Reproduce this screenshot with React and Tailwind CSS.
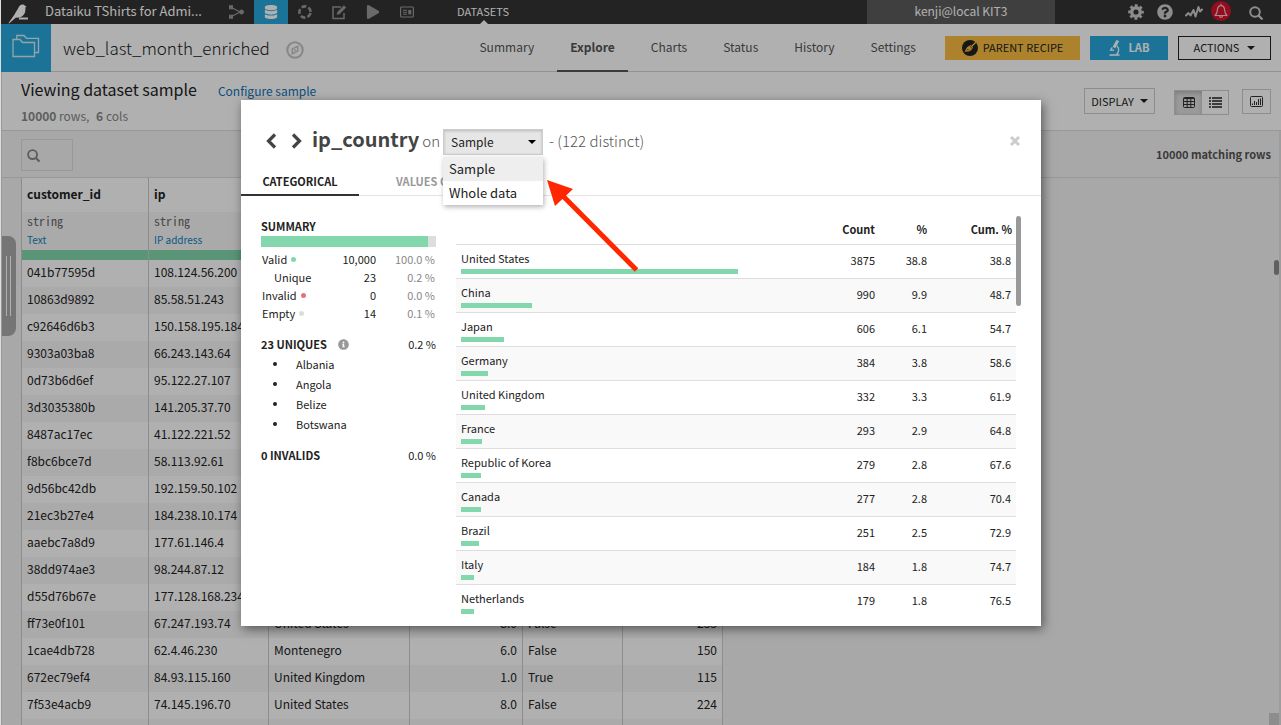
import React from "react";
import { FaQuestionCircle, FaPlay, FaInfoCircle, FaDatabase } from "react-icons/fa";

const tabs = ["Summary", "Explore", "Charts", "Status", "History", "Settings"];

const rows = [
  ["041b77595d", "108.124.56.200"],
  ["10863d9892", "85.58.51.243"],
  ["c92646d6b3", "150.158.195.184"],
  ["9303a03ba8", "66.243.143.64"],
  ["0d73b6d6ef", "95.122.27.107"],
  ["3d3035380b", "141.205.37.70"],
  ["8487ac17ec", "41.122.221.52"],
  ["f8bc6bce7d", "58.113.92.61"],
  ["9d56bc42db", "192.159.50.102"],
  ["21ec3b27e4", "184.238.10.174"],
  ["aaebc7a8d9", "177.61.146.4"],
  ["38dd974ae3", "98.244.87.12"],
  ["d55d76b67e", "177.128.168.234"],
  ["ff73e0f101", "67.247.193.74", "United States", "8.0", "False", "233"],
  ["1cae4db728", "62.4.46.230", "Montenegro", "6.0", "False", "150"],
  ["672ec79ef4", "84.93.115.160", "United Kingdom", "1.0", "True", "115"],
  ["7f53e4acb9", "74.145.196.70", "United States", "8.0", "False", "224"],
  ["", ""],
];

const countries = [
  ["United States", 277, "3875", "38.8", "38.8"],
  ["China", 71, "990", "9.9", "48.7"],
  ["Japan", 43, "606", "6.1", "54.7"],
  ["Germany", 27, "384", "3.8", "58.6"],
  ["United Kingdom", 24, "332", "3.3", "61.9"],
  ["France", 21, "293", "2.9", "64.8"],
  ["Republic of Korea", 20, "279", "2.8", "67.6"],
  ["Canada", 20, "277", "2.8", "70.4"],
  ["Brazil", 18, "251", "2.5", "72.9"],
  ["Italy", 13, "184", "1.8", "74.7"],
  ["Netherlands", 13, "179", "1.8", "76.5"],
];

const summary = [
  ["Valid", "bg-[#82d8ac]", "10,000", "100.0 %"],
  ["Unique", null, "23", "0.2 %"],
  ["Invalid", "bg-[#e0757e]", "0", "0.0 %"],
  ["Empty", "bg-[#dddddd]", "14", "0.1 %"],
];

function Bird() {
  return (
    <svg viewBox="0 0 21 20" className="h-5 w-[21px]" fill="#fff">
      <path d="M0.500 19 L6.500 10.500 C8 8 8.600 6.500 9.800 5 C11 3 11.600 0.600 14.300 0.500 C15.800 0.400 16.700 1 17.200 2 L18.600 2.600 L17.400 3.400 C17.600 6.500 17.300 9.800 14.500 12 C13 13.200 10.500 13.800 8 13.600 L1 19.400 Z" />
      <rect x="11" y="13.500" width="9" height="2" />
    </svg>
  );
}

function ShareIcon() {
  return (
    <svg viewBox="0 0 16 14" className="h-[14px] w-4" fill="#999" stroke="#999">
      <path d="M2.500 2.500 L11 7 L2.500 11.500" fill="none" strokeWidth="1.200" />
      <rect x="0.500" y="0.800" width="3" height="3" />
      <rect x="0.500" y="10.200" width="3" height="3" />
      <circle cx="12.500" cy="7" r="2" />
    </svg>
  );
}

function RingIcon() {
  return (
    <svg viewBox="0 0 16 16" className="size-4" fill="none" stroke="#999" strokeWidth="2.600">
      <circle cx="8" cy="8" r="5.600" strokeDasharray="4.900 2.140" strokeDashoffset="-1.100" />
    </svg>
  );
}

function EditIcon() {
  return (
    <svg viewBox="0 0 16 16" className="size-4" fill="none" stroke="#999">
      <path d="M10 3 H2 V14.500 H13 V9" strokeWidth="1.500" />
      <path d="M6 10.500 L6.600 7.900 L13 1.600 L14.900 3.500 L8.600 9.900 Z" fill="#999" strokeWidth="0.500" />
    </svg>
  );
}

function CardIcon() {
  return (
    <svg viewBox="0 0 14 12" className="h-3 w-[14px]" fill="none" stroke="#999">
      <rect x="0.600" y="1" width="12.800" height="10" rx="1" strokeWidth="1.200" />
      <path d="M3 4.200 H7 M3 6.200 H7 M3 8.200 H7" strokeWidth="1.100" />
      <rect x="8.300" y="4" width="3" height="4.400" fill="#999" stroke="none" />
    </svg>
  );
}

function GearIcon() {
  return (
    <svg viewBox="0 0 16 16" className="size-4" fill="none" stroke="#ccc">
      <circle cx="8" cy="8" r="4.300" strokeWidth="3.400" />
      <circle cx="8" cy="8" r="6.600" strokeWidth="2.400" strokeDasharray="2.900 2.284" strokeDashoffset="1.450" />
    </svg>
  );
}

function ActivityIcon() {
  return (
    <svg viewBox="0 0 18 14" className="h-[14px] w-[18px]" fill="none" stroke="#ccc" strokeWidth="2" strokeLinejoin="round" strokeLinecap="round">
      <path d="M1 10.500 L3.500 8 L5.500 10.500 L8.500 5 L10.500 11.500 L13.500 2 L15 6.500 L17 4.500" />
    </svg>
  );
}

function BellIcon() {
  return (
    <svg viewBox="0 0 14 16" className="h-4 w-[14px]" fill="none" stroke="#f0c8cc" strokeWidth="1.200" strokeLinejoin="round">
      <path d="M1 12.500 C3.300 10.500 3.200 8.500 3.500 6.300 C3.800 4 5 2.600 7 2.600 C9 2.600 10.200 4 10.500 6.300 C10.800 8.500 10.700 10.500 13 12.500 Z" />
      <path d="M7 0.800 V2.600 M5.500 12.800 C5.600 14.800 8.400 14.800 8.500 12.800" />
    </svg>
  );
}

function SearchIcon({ color, className }) {
  return (
    <svg viewBox="0 0 14 14" className={className} fill="none" stroke={color}>
      <circle cx="6" cy="6" r="4.800" strokeWidth="2" />
      <path d="M9.700 9.700 L12.800 12.800" strokeWidth="2.300" strokeLinecap="round" />
    </svg>
  );
}

function FoldersIcon() {
  return (
    <svg viewBox="0 0 28 24" className="h-6 w-7" fill="none" stroke="#d8eef8" strokeWidth="1.300">
      <path d="M1 5.500 H8 L10.500 8.500 H22.500 V22.500 H1 Z" />
      <path d="M4.800 5.500 V1.500 H12 L14.500 4.300 H26.500 V18.500 H22.500" />
    </svg>
  );
}

function CompassIcon() {
  return (
    <svg viewBox="0 0 18 18" className="size-[18px]" fill="none" stroke="#c4c4c4">
      <circle cx="9" cy="9" r="7.700" strokeWidth="2" />
      <path d="M6.300 12.800 V7.900 L11.700 5.200 V10.100 Z" strokeWidth="1.600" />
      <circle cx="9" cy="9" r="0.900" fill="#c4c4c4" stroke="none" />
    </svg>
  );
}

function BroomIcon() {
  return (
    <svg viewBox="0 0 16 16" className="size-4">
      <circle cx="8" cy="8" r="8" fill="#222" />
      <path d="M14 2 L9.800 6.200" stroke="#f9be40" strokeWidth="1.300" />
      <path d="M8.600 5 L11 7.400 L9 10.500 C7 11.800 4.500 11.900 2.600 11.400 C3.600 10.200 4.300 8 5.600 6.800 Z" fill="#f9be40" />
      <path d="M4.600 10.600 L6.400 8.800 M7 10.800 L8 9.600 M7.600 6 L10 8.400" stroke="#222" strokeWidth="0.700" />
    </svg>
  );
}

function MicroscopeIcon() {
  return (
    <svg viewBox="0 0 12 16" className="h-4 w-3" fill="none" stroke="#fff">
      <path d="M0.500 15 H10.500" strokeWidth="1.600" />
      <path d="M8.800 0.600 L5 7.400" strokeWidth="3" />
      <path d="M3.200 7.400 L1.600 10.200 H5 M8 6 C10.300 8 10.300 11.500 7.600 14.500" strokeWidth="1.300" />
    </svg>
  );
}

function Caret() {
  return (
    <svg viewBox="0 0 8 4" className="h-1 w-2" fill="currentColor">
      <path d="M0 0 H8 L4 4 Z" />
    </svg>
  );
}

function Chevron({ d }) {
  return (
    <svg viewBox="0 0 12 16" className="h-4 w-3" fill="none" stroke="#444" strokeWidth="3.200">
      <path d={d} />
    </svg>
  );
}

function CloseIcon() {
  return (
    <svg viewBox="0 0 10 10" className="size-[10px]" fill="none" stroke="#ccc" strokeWidth="3">
      <path d="M1 1 L9 9 M9 1 L1 9" />
    </svg>
  );
}

function GridIcon() {
  return (
    <svg viewBox="0 0 12 11" className="h-[11px] w-3" fill="none" stroke="#333">
      <rect x="0.500" y="0.500" width="11" height="10" rx="1" />
      <path d="M0.500 1.500 H11.500 M0.500 4.500 H11.500 M0.500 7.500 H11.500 M4.200 1 V10.500 M7.800 1 V10.500" />
    </svg>
  );
}

function ListIcon() {
  return (
    <svg viewBox="0 0 13 11" className="h-[11px] w-[13px]" stroke="#222" strokeWidth="1.700">
      <path d="M0 1 H2 M3 1 H13 M0 4 H2 M3 4 H13 M0 7 H2 M3 7 H13 M0 10 H2 M3 10 H13" />
    </svg>
  );
}

function ChartIcon() {
  return (
    <svg viewBox="0 0 13 11" className="h-[11px] w-[13px]" fill="none" stroke="#333">
      <rect x="0.500" y="0.500" width="12" height="10" rx="1" />
      <path d="M2.500 9 V7.500 M4.500 9 V5 M6.500 9 V6 M8.500 9 V3 M10.500 9 V2.500" />
    </svg>
  );
}

function TopBar() {
  return (
    <header className="flex h-6 shrink-0 items-center bg-[#333] text-white">
      <a href="#home" aria-label="Home" className="ml-[7px] mt-[3px] block">
        <Bird />
      </a>
      <a href="#project" className="ml-4 w-[166px] whitespace-nowrap pb-[2px] text-[13px] leading-[22px]">
        Dataiku TShirts for Admi...
      </a>
      <nav aria-label="Sections" className="ml-[9px] flex h-full items-center">
        <button aria-label="Flow" className="flex h-full w-[34px] items-center justify-center"><ShareIcon /></button>
        <button aria-label="Datasets" className="flex h-full w-[34px] items-center justify-center bg-[#28a9dd]">
          <FaDatabase className="size-[14px] text-white" />
        </button>
        <button aria-label="Recipes" className="flex h-full w-[34px] items-center justify-center"><RingIcon /></button>
        <button aria-label="Notebooks" className="flex h-full w-[34px] items-center justify-center"><EditIcon /></button>
        <button aria-label="Jobs" className="flex h-full w-[34px] items-center justify-center">
          <FaPlay className="size-[14px] text-[#999]" />
        </button>
        <button aria-label="Dashboard" className="flex h-full w-[34px] items-center justify-center"><CardIcon /></button>
      </nav>
      <div className="relative ml-[33px] pb-[2px] text-[11px] leading-[22px]">
        DATASETS
        <svg viewBox="0 0 8 4" className="absolute bottom-0 left-[23px] h-1 w-2" fill="#fff">
          <path d="M0 4 L4 0 L8 4 Z" />
        </svg>
      </div>
      <div className="ml-auto w-[188px] bg-[#5c5c5c] pb-[2px] text-center text-[12px] leading-[22px]">kenji@local KIT3</div>
      <div className="ml-[73px] mr-[18px] flex items-center">
        <button aria-label="Administration"><GearIcon /></button>
        <button aria-label="Help" className="ml-[13px]"><FaQuestionCircle className="size-4 text-[#ccc]" /></button>
        <button aria-label="Activity" className="ml-3"><ActivityIcon /></button>
        <button aria-label="Notifications" className="mb-[2px] ml-2 flex size-5 items-center justify-center rounded-full bg-[#d8122c]">
          <BellIcon />
        </button>
        <button aria-label="Search" className="ml-[18px] mt-[2px]"><SearchIcon color="#ccc" className="size-[14px]" /></button>
      </div>
    </header>
  );
}

function DatasetHeader() {
  return (
    <div className="flex h-12 shrink-0 border-b border-[#d4d4d4] bg-white">
      <a href="#datasets" aria-label="Datasets" className="-mb-px flex w-[50px] items-center justify-center bg-[#28a9dd] pb-1">
        <FoldersIcon />
      </a>
      <h1 className="ml-3 text-[17px] font-light leading-[47px] text-[#222]">web_last_month_enriched</h1>
      <button aria-label="Navigate" className="ml-4 mt-1"><CompassIcon /></button>
      <nav aria-label="Dataset" className="-mb-px ml-auto flex gap-[10px] text-[12px] leading-[46px] text-[#555]">
        {tabs.map((t) => (
          <a
            key={t}
            href={"#" + t.toLowerCase()}
            className={t === "Explore" ? "border-b-2 border-[#555] px-[13px] font-bold" : "px-[13px]"}
          >
            {t}
          </a>
        ))}
      </nav>
      <div className="ml-4 mr-[10px] flex items-center gap-[10px] text-[11px]">
        <button className="flex h-6 w-[135px] items-center justify-center gap-[5px] bg-[#f9be40] text-[#222]">
          <BroomIcon />
          PARENT RECIPE
        </button>
        <button className="flex h-6 w-[78px] items-center justify-center gap-2 bg-[#28a9dd] font-bold text-white">
          <MicroscopeIcon />
          LAB
        </button>
        <button className="flex h-6 w-[93px] items-center justify-center gap-2 border border-[#222] text-[#222]">
          ACTIONS
          <Caret />
        </button>
      </div>
    </div>
  );
}

function SampleBar() {
  return (
    <div className="flex h-[59px] shrink-0 items-center justify-between border-b border-l border-[#ddd] bg-white pl-[19px] pr-[10px]">
      <div>
        <div className="flex items-baseline gap-[21px]">
          <h2 className="text-[16px] leading-[26px] text-[#222]">Viewing dataset sample</h2>
          <a href="#configure" className="text-[12px] leading-[26px] text-[#0f74b8]">Configure sample</a>
        </div>
        <p className="text-[12px] leading-[23px] text-[#888]">
          <b>10000</b> rows, <b className="ml-1">6</b> cols
        </p>
      </div>
      <div className="flex items-center text-[11px] text-[#222]">
        <button className="flex h-[26px] w-[71px] items-center justify-center gap-[6px] border border-[#ccc]">
          DISPLAY
          <Caret />
        </button>
        <div className="ml-[19px] mt-[2px] flex h-[25px] border border-[#ccc]">
          <button aria-label="Table view" className="flex w-[27px] items-center justify-center bg-[#e0e0e0] shadow-[inset_0_2px_4px_rgba(0,0,0,0.2)]"><GridIcon /></button>
          <button aria-label="List view" className="flex w-[26px] items-center justify-center"><ListIcon /></button>
        </div>
        <button aria-label="Quick chart" className="ml-[13px] flex h-[25px] w-[29px] items-center justify-center border border-[#ccc]"><ChartIcon /></button>
      </div>
    </div>
  );
}

function DataTable() {
  return (
    <table className="w-[701px] table-fixed border-collapse border-l border-[#ccc] text-left text-[12px] text-[#222]">
      <colgroup>
        <col className="w-[127px]" />
        <col className="w-[120px]" />
        <col className="w-[141px]" />
        <col className="w-[113px]" />
        <col className="w-[100px]" />
        <col className="w-[100px]" />
      </colgroup>
      <thead>
        <tr className="h-[34px] bg-white">
          {["customer_id", "ip", "ip_country", "", "", ""].map((h, i) => (
            <th key={i} className="border-r border-[#ccc] p-0 pb-[2px] pl-[5px] text-[12px] font-bold">{h}</th>
          ))}
        </tr>
        <tr className="bg-[#f6f6f6]">
          {["Text", "IP address", "Country", "", "", ""].map((m, i) => (
            <td key={i} className="h-[38px] border-r border-[#ccc] p-0 pb-px pl-[5px]">
              <div className="font-['Noto_Sans_Mono_CJK_SC','DejaVu_Sans_Mono',monospace] text-[12px] leading-[18px] text-[#666]">{m && "string"}</div>
              <div className="text-[10px] leading-[19px] text-[#0f84c0]">{m}</div>
            </td>
          ))}
        </tr>
        <tr>
          {[0, 1, 2, 3, 4, 5].map((i) => (
            <td key={i} className="h-[10px] border-r border-[#ccc] bg-[#82d8ac] p-0" />
          ))}
        </tr>
      </thead>
      <tbody>
        {rows.map((r, i) => (
          <tr key={i} className="h-[27px] odd:bg-white even:bg-[#f6f6f6]">
            {[0, 1, 2, 3, 4, 5].map((c) => (
              <td
                key={c}
                className={
                  c === 3 || c === 5
                    ? "border-r border-[#ccc] p-0 pr-[5px] text-right align-top leading-[23px]"
                    : "border-r border-[#ccc] p-0 pl-[5px] align-top leading-[23px]"
                }
              >
                {r[c]}
              </td>
            ))}
          </tr>
        ))}
      </tbody>
    </table>
  );
}

function Explorer() {
  return (
    <main className="relative min-h-0 flex-1 overflow-hidden border-l border-[#ddd] bg-[#f3f3f3]">
      <div className="flex h-[46px] items-center justify-between pl-[19px] pr-[10px]">
        <label className="mt-[2px] flex h-8 w-[52px] items-center border border-[#ddd] pl-[5px]">
          <SearchIcon color="#888" className="size-[13px]" />
          <input type="text" aria-label="Search columns" className="ml-1 w-6 bg-transparent text-[12px] outline-none" />
        </label>
        <p className="text-[11px] font-bold text-[#555]">10000 matching rows</p>
      </div>
      <div className="border-t border-[#ddd] pl-[19px]">
        <DataTable />
      </div>
      <div className="absolute left-[-1px] top-[105px] flex h-[100px] w-[15px] items-center justify-center gap-[3px] rounded-r-lg bg-[#aaa]">
        <span className="h-[60px] w-px bg-white" />
        <span className="h-[60px] w-px bg-white" />
      </div>
      <div className="absolute right-[2px] top-[129px] h-[15px] w-[5px] rounded-sm bg-[#8c8c8c]" />
      <div className="absolute bottom-0 right-[2px] h-3 w-[10px] bg-[#ccc]" />
      <div className="absolute inset-y-0 right-0 w-[2px] bg-[#e4e4e4]" />
    </main>
  );
}

function SampleSelect() {
  return (
    <div className="relative ml-[3px] h-[26px] w-[100px] text-[#222]">
      <select
        aria-label="Scope"
        defaultValue="Sample"
        className="block h-[26px] w-full appearance-none border border-[#ccc] bg-[#e6e6e6] pl-[7px] text-[12px] leading-[22px] shadow-[inset_0_1px_3px_rgba(0,0,0,0.2)]"
      >
        <option>Sample</option>
        <option>Whole data</option>
      </select>
      <span className="pointer-events-none absolute right-[7px] top-[11px] text-black"><Caret /></span>
      <ul role="listbox" aria-label="Scope options" className="absolute left-0 top-7 z-10 w-full bg-white text-[13px] leading-6 shadow-[1px_2px_5px_rgba(0,0,0,0.3)]">
        <li role="option" aria-selected="true" className="bg-[#eee] pl-[6px]">Sample</li>
        <li role="option" aria-selected="false" className="pl-[6px]">Whole data</li>
      </ul>
    </div>
  );
}

function SummaryPanel() {
  return (
    <section className="w-[175px] text-[11px] text-[#222]">
      <h3 className="mt-[10px] font-bold leading-5">SUMMARY</h3>
      <div className="flex h-[11px] bg-[#ddd]">
        <div className="w-[167px] bg-[#82d8ac]" />
      </div>
      <table className="mt-[3px] w-full border-collapse">
        <tbody>
          {summary.map(([label, dot, n, pct]) => (
            <tr key={label} className="h-[18px] leading-[18px]">
              <th scope="row" className={dot ? "p-0 pl-px text-left font-normal" : "p-0 pl-[13px] text-left font-normal"}>
                <span className="flex items-center gap-1">
                  {label}
                  {dot && <span className={"size-[5px] rounded-full " + dot} />}
                </span>
              </th>
              <td className="p-0 text-right">{n}</td>
              <td className="w-[60px] p-0 pr-px text-right text-[#888]">{pct}</td>
            </tr>
          ))}
        </tbody>
      </table>
      <div className="mt-3 flex items-center leading-5">
        <h3 className="font-bold">23 UNIQUES</h3>
        <FaInfoCircle className="ml-[11px] size-[11px] text-[#999]" />
        <span className="ml-auto">0.2 %</span>
      </div>
      <ul className="leading-5">
        {["Albania", "Angola", "Belize", "Botswana"].map((c) => (
          <li key={c} className="flex items-center">
            <span className="ml-3 mr-[19px] size-1 rounded-full bg-[#222]" />
            {c}
          </li>
        ))}
      </ul>
      <div className="mt-[11px] flex justify-between leading-5">
        <h3 className="font-bold">0 INVALIDS</h3>
        <span>0.0 %</span>
      </div>
    </section>
  );
}

function CountryTable() {
  return (
    <div className="ml-5 flex min-w-0 flex-1 items-start">
      <table className="w-full table-fixed border-collapse text-[11px] text-[#222]">
        <thead>
          <tr className="h-[38px] text-right font-bold">
            <th aria-label="Value" className="p-0" />
            <th className="w-[70px] p-0 pt-[9px] leading-[28px]">Count</th>
            <th className="w-[52px] p-0 pt-[9px] leading-[28px]">%</th>
            <th className="w-[89px] p-0 pr-1 pt-[9px] leading-[28px]">Cum. %</th>
          </tr>
        </thead>
        <tbody>
          {countries.map(([name, w, n, p, cum]) => (
            <tr key={name} className="h-[34px] border-t border-[#ddd] text-right odd:bg-white even:bg-[#f9f9f9]">
              <td className="p-0 pl-[5px] text-left leading-[18px]">
                {name}
                <div className="mt-[2px] h-[5px] bg-[#82d8ac]" style={{ width: w }} />
              </td>
              <td className="p-0 pb-[2px]">{n}</td>
              <td className="p-0 pb-[2px]">{p}</td>
              <td className="p-0 pb-[2px] pr-[5px]">{cum}</td>
            </tr>
          ))}
        </tbody>
      </table>
      <div className="mr-5 mt-[10px] h-[90px] w-[5px] shrink-0 rounded-sm bg-[#999]" />
    </div>
  );
}

function Arrow() {
  return (
    <svg viewBox="0 0 96 96" className="pointer-events-none absolute left-[304px] top-[78px] z-20 size-24" fill="#ff2600">
      <path d="M2 2 L28 11 L10 28 Z" />
      <path d="M17 17 L91.500 92" stroke="#ff2600" strokeWidth="5" />
    </svg>
  );
}

function AnalysisDialog() {
  return (
    <div role="dialog" aria-label="ip_country analysis" className="relative flex h-[526px] w-[800px] flex-col bg-white shadow-[2px_3px_10px_rgba(0,0,0,0.5)]">
      <div className="flex items-center pl-6 pr-[21px] pt-[29px] text-[#555]">
        <button aria-label="Previous column" className="pb-[2px]"><Chevron d="M10 1.500 L3.500 8 L10 14.500" /></button>
        <button aria-label="Next column" className="ml-[14px] pb-[2px]"><Chevron d="M2 1.500 L8.500 8 L2 14.500" /></button>
        <h2 className="ml-[9px] pb-[6px] text-[20px] font-bold leading-5 text-[#444]">ip_country</h2>
        <span className="ml-[3px] pb-[2px] text-[15px] font-light leading-6">on</span>
        <SampleSelect />
        <span className="ml-[6px] pb-[2px] text-[15px] font-light leading-6">- (122 distinct)</span>
        <button aria-label="Close" className="ml-auto pb-[2px]"><CloseIcon /></button>
      </div>
      <div role="tablist" className="mt-[14px] flex h-[27px] border-b border-[#e4e4e4] text-[11px] font-bold leading-[25px]">
        <button role="tab" aria-selected="true" className="-mb-px flex h-[27px] w-[118px] justify-center border-b-2 border-[#333] text-[#222]">CATEGORICAL</button>
        <button role="tab" aria-selected="false" className="flex pl-[37px] text-[#999]">VALUES CLUSTERING</button>
      </div>
      <div className="flex min-h-0 flex-1 overflow-hidden pl-5 pt-[10px]">
        <SummaryPanel />
        <CountryTable />
      </div>
      <Arrow />
    </div>
  );
}

export default function App() {
  return (
    <div className="relative flex h-screen flex-col overflow-hidden border-l border-[#ddd] bg-white font-['Noto_Sans_CJK_SC',sans-serif]">
      <TopBar />
      <DatasetHeader />
      <SampleBar />
      <Explorer />
      <div className="absolute inset-0 flex items-start justify-center bg-black/31 pt-[100px]">
        <AnalysisDialog />
      </div>
    </div>
  );
}
